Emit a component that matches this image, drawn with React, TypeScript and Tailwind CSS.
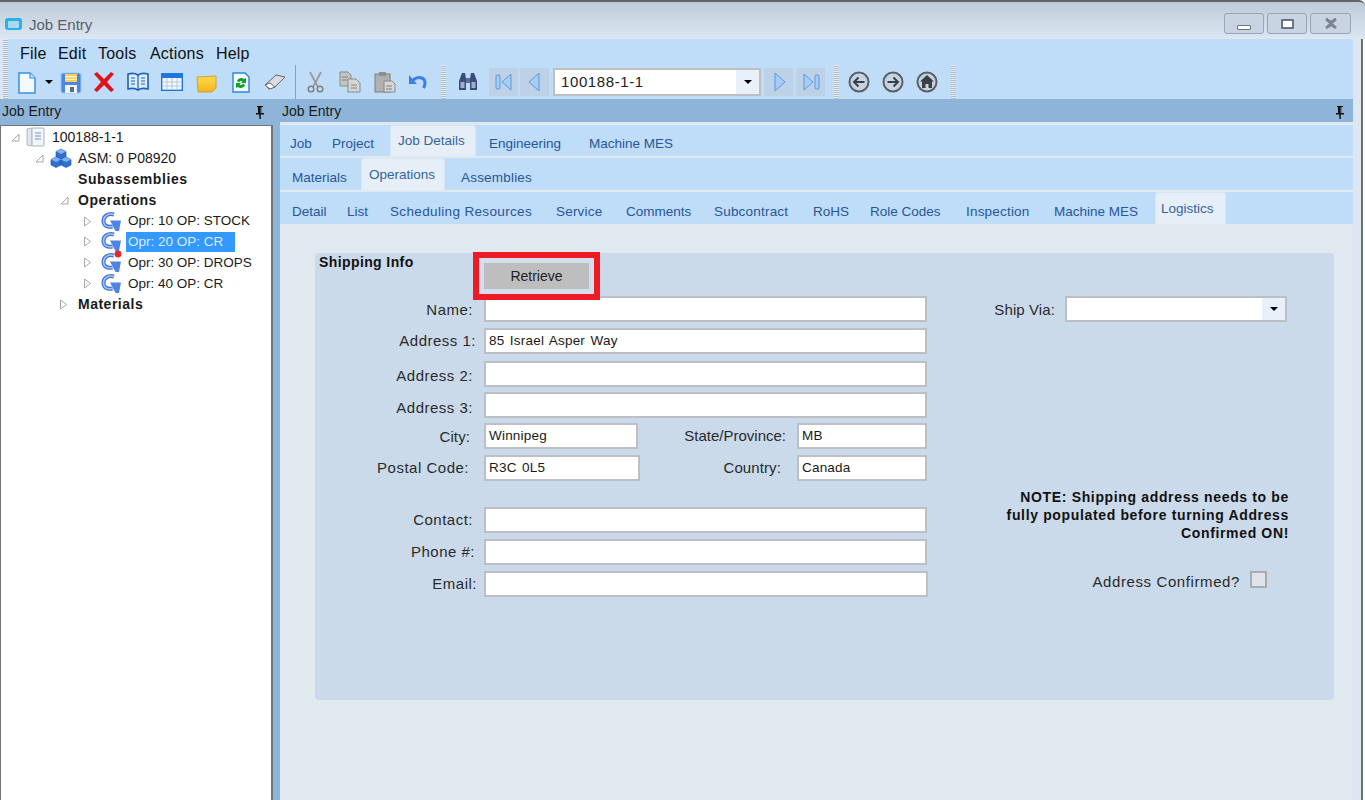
import type { ReactNode } from 'react';

const Grip = () => (
    <div className="w-[5px] h-full shrink-0 bg-[repeating-linear-gradient(to_bottom,#e4ebf2_0px,#e4ebf2_1px,#b4bcc4_1px,#b4bcc4_2px)]" />
);

const Slot = ({ children, className }: { children: ReactNode; className: string }) => (
    <div className={`flex items-center justify-center shrink-0 h-full ${className}`}>{children}</div>
);

const PinIcon = () => (
    <svg width="12" height="14" viewBox="0 0 12 14">
        <path d="M3 1h6v1H8v6h2v1.500H2V8h2V2H3z" fill="#111" />
        <rect x="5.300" y="9" width="1.500" height="5" fill="#111" />
        <rect x="6.500" y="2" width="1.500" height="6" fill="#777" />
    </svg>
);

const NewDoc = () => (
    <svg width="20" height="22" viewBox="0 0 20 22">
        <path d="M2 1h11l5 5v15H2z" fill="#f4f9ff" stroke="#3b8fe0" strokeWidth="1.500" />
        <path d="M13 1v5h5" fill="#cfe4fa" stroke="#3b8fe0" strokeWidth="1.200" />
    </svg>
);

const Save = () => (
    <svg width="22" height="22" viewBox="0 0 22 22">
        <rect x="1" y="1" width="20" height="20" rx="2" fill="#4a86e4" stroke="#9cc8f4" />
        <rect x="5" y="2" width="12" height="8" fill="#f7cf5e" />
        <rect x="5" y="4" width="12" height="1.500" fill="#fff1b8" />
        <rect x="5" y="7" width="12" height="1" fill="#fff1b8" />
        <rect x="5" y="13" width="12" height="8" fill="#eef2f8" />
        <rect x="10" y="15" width="4" height="5" fill="#5a6a86" />
    </svg>
);

const RedX = () => (
    <svg width="22" height="22" viewBox="0 0 22 22">
        <path d="M1 3l3-2 7 7 7-7 3 2-7 8 7 8-3 2-7-7-7 7-3-2 7-8z" fill="#e0121a" />
    </svg>
);

const Book = () => (
    <svg width="22" height="20" viewBox="0 0 22 20">
        <path d="M1 2c4-1 7-1 10 1 3-2 6-2 10-1v15c-4-1-7-1-10 1-3-2-6-2-10-1z" fill="#dcecfb" stroke="#1f62b8" strokeWidth="1.600" />
        <path d="M11 3v15M4 6h4M4 9h4M4 12h4M14 6h4M14 9h4M14 12h4" stroke="#1f62b8" strokeWidth="1.200" fill="none" />
    </svg>
);

const Calendar = () => (
    <svg width="22" height="18" viewBox="0 0 22 18">
        <rect x="0.700" y="0.700" width="20.600" height="16.600" fill="#f4f8fd" stroke="#1c78e0" strokeWidth="1.400" />
        <rect x="1" y="1" width="20" height="4" fill="#1c78e0" />
        <path d="M1 9h20M1 13h20M6 5v12M11 5v12M16 5v12" stroke="#b4c8e0" strokeWidth="1" />
    </svg>
);

const Note = () => (
    <svg width="21" height="18" viewBox="0 0 21 18">
        <defs>
            <linearGradient id="noteFill" x1="0" y1="0" x2="0" y2="1">
                <stop offset="0" stopColor="#fdd94e" />
                <stop offset="1" stopColor="#f3b61c" />
            </linearGradient>
        </defs>
        <path d="M1 2l19-1v12l-4 4-14 0z" fill="url(#noteFill)" stroke="#c8971c" strokeWidth="0.800" />
    </svg>
);

const Refresh = () => (
    <svg width="18" height="21" viewBox="0 0 18 21">
        <path d="M1 1h12l4 4v15H1z" fill="#f2f8fe" stroke="#2a86dc" strokeWidth="1.400" />
        <path d="M5 9c1-3 5-4 7-2l2-1v5h-5l1.500-1.500C9.500 8.500 7.500 9 7 10.500z" fill="#12a02c" />
        <path d="M13 13c-1 3-5 4-7 2l-2 1v-5h5l-1.500 1.500c1 1 3 .5 3.500-1z" fill="#12a02c" />
    </svg>
);

const Eraser = () => (
    <svg width="22" height="18" viewBox="0 0 22 18">
        <path d="M1 12L12 2l9 2-10 10-6 2z" fill="#d8dbe0" stroke="#666" strokeWidth="1" />
        <path d="M1 12l5 4 5-2-5-4z" fill="#fff" stroke="#666" strokeWidth="1" />
    </svg>
);

const Scissors = () => (
    <svg width="17" height="22" viewBox="0 0 17 22" fill="none">
        <path d="M3 1l8 15M14 1L6 16" stroke="#9a9a9a" strokeWidth="1.800" />
        <circle cx="4" cy="18" r="2.800" stroke="#808080" strokeWidth="1.500" />
        <circle cx="13" cy="18" r="2.800" stroke="#808080" strokeWidth="1.500" />
    </svg>
);

const CopyIcon = () => (
    <svg width="22" height="22" viewBox="0 0 22 22">
        <path d="M1 1h8l3 3v11H1z" fill="#c4c4c4" stroke="#8a8a8a" />
        <path d="M9 8h8l4 4v9H9z" fill="#d6d6d6" stroke="#8a8a8a" />
        <path d="M12 14h6M12 17h6M3 6h6M3 9h5" stroke="#808080" />
    </svg>
);

const Paste = () => (
    <svg width="22" height="22" viewBox="0 0 22 22">
        <rect x="1" y="3" width="15" height="18" fill="#b0b0b0" stroke="#808080" />
        <rect x="5" y="1" width="7" height="4" fill="#8f8f8f" />
        <path d="M10 10h8l3 3v8H10z" fill="#d6d6d6" stroke="#8a8a8a" />
        <path d="M12 15h6M12 18h6" stroke="#808080" />
    </svg>
);

const Undo = () => (
    <svg width="20" height="16" viewBox="0 0 20 16" fill="none">
        <path d="M5 6c5-4 12-3 12 3 0 2-.5 3-1.500 5" stroke="#3f7fe0" strokeWidth="3" />
        <path d="M1 1v9h8z" fill="#3f7fe0" />
    </svg>
);

const Binoculars = () => (
    <svg width="20" height="20" viewBox="0 0 20 20">
        <path d="M4 1h3l1 6v11H1V9z" fill="#3a4a7c" />
        <path d="M13 1h3l3 8v9h-7V7z" fill="#3a4a7c" />
        <rect x="8" y="6" width="4" height="5" fill="#5c6c9c" />
        <rect x="2.500" y="10" width="4" height="6" fill="#a0aed6" />
        <rect x="13.500" y="10" width="4" height="6" fill="#a0aed6" />
    </svg>
);

const NavButton = ({ dir, bar }: { dir: 'left' | 'right'; bar?: boolean }) => (
    <div className="w-[29px] h-[28px] shrink-0 flex items-center justify-center bg-[#bed2e7]">
        <svg width="18" height="18" viewBox="0 0 18 18">
            {dir === 'left' ? (
                <>
                    {bar && <rect x="1" y="2" width="4" height="14" rx="1" fill="#a7cdf5" stroke="#5d97dc" />}
                    <path d={bar ? 'M16 1v16L7 9z' : 'M13 0v18L3 9z'} fill="#a7cdf5" stroke="#5d97dc" />
                </>
            ) : (
                <>
                    <path d={bar ? 'M2 1v16l9-8z' : 'M5 0v18L15 9z'} fill="#a7cdf5" stroke="#5d97dc" />
                    {bar && <rect x="13" y="2" width="4" height="14" rx="1" fill="#a7cdf5" stroke="#5d97dc" />}
                </>
            )}
        </svg>
    </div>
);

const CircleIcon = ({ children }: { children: ReactNode }) => (
    <svg width="22" height="22" viewBox="0 0 22 22">
        <circle cx="11" cy="11" r="9.500" fill="#c6d3e0" stroke="#5a5f66" strokeWidth="2" />
        {children}
    </svg>
);

const ComboArrow = () => (
    <div className="w-[23px] h-full shrink-0 flex items-center justify-center bg-[#e8f1fa]">
        <div className="w-0 h-0 border-x-[4px] border-x-transparent border-t-[4px] border-t-black" />
    </div>
);

const Expander = ({ open }: { open?: boolean }) => (
    <svg width="9" height="11" viewBox="0 0 9 11" fill="none">
        {open ? <path d="M1 9h7V2z" stroke="#a8a8a8" /> : <path d="M1.500 1l6 4.500-6 4.500z" stroke="#a8a8a8" />}
    </svg>
);

const JobFile = () => (
    <svg width="20" height="20" viewBox="0 0 20 20">
        <path d="M1 2l5-1v18l-5-1z" fill="#dfe6ee" stroke="#b0bac6" />
        <rect x="6" y="1" width="12" height="18" rx="1" fill="#f2f5f9" stroke="#a8b2be" />
        <path d="M9 6h6M9 9h6M9 12h6" stroke="#6f93c4" />
    </svg>
);

const Cubes = () => (
    <svg width="22" height="21" viewBox="0 0 22 21">
        <path d="M11 1l5 2.500V9l-5 2.500L6 9V3.500z" fill="#2f6fd0" stroke="#1c4fa8" strokeWidth="0.600" />
        <path d="M11 1l5 2.500-5 2.500-5-2.500z" fill="#7fb2f0" />
        <path d="M6 9l5 2.500V17l-5 2.500L1 17v-5.500z" fill="#2f6fd0" stroke="#1c4fa8" strokeWidth="0.600" />
        <path d="M6 9l5 2.500-5 2.500-5-2.500z" fill="#7fb2f0" />
        <path d="M16 9l5 2.500V17l-5 2.500-5-2.500v-5.500z" fill="#2f6fd0" stroke="#1c4fa8" strokeWidth="0.600" />
        <path d="M16 9l5 2.500-5 2.500-5-2.500z" fill="#7fb2f0" />
    </svg>
);

const OpIcon = ({ flag }: { flag?: boolean }) => (
    <svg width="21" height="21" viewBox="0 0 21 21" fill="none" className="overflow-visible">
        <path d="M13 3.500C7 2 2.500 5 2.500 10c0 4.500 3.500 6.500 9 5.500" stroke="#3f74dc" strokeWidth="4" />
        <path d="M13 3.500C7 2 2.500 5 2.500 10c0 4.500 3.500 6.500 9 5.500" stroke="#a9c6f6" strokeWidth="1.500" />
        <path d="M9 9.500h11L18 20h-3.500z" fill="#4f84e4" />
        {flag && <circle cx="17" cy="2" r="3.400" fill="#e02b2b" />}
    </svg>
);

const TreeRow = ({ pad, children }: { pad: string; children: ReactNode }) => (
    <div className={`flex items-center h-[20.900px] text-[14px] text-[#1a1a1a] whitespace-nowrap ${pad}`}>{children}</div>
);

const TreeOpr = ({ label, selected, flag }: { label: string; selected?: boolean; flag?: boolean }) => (
    <TreeRow pad="pl-[82px]">
        <Slot className="w-[18px] justify-start"><Expander /></Slot>
        <Slot className="w-[25px] justify-start"><OpIcon flag={flag} /></Slot>
        <span className={selected ? 'w-[109px] pl-[2px] leading-[20px] text-[13.500px] bg-[#3399ff] text-[#dcecff]' : 'pl-[2px] text-[13.500px]'}>{label}</span>
    </TreeRow>
);

const Tab = ({ label, width, active, lead }: { label: string; width: string; active?: boolean; lead: string }) => (
    <div className={`flex items-center shrink-0 h-full whitespace-nowrap text-[13.500px] ${width}`}>
        {active ? (
            <div className={`h-full w-full rounded-t-[3px] bg-[#e6eff7] border-x border-t border-[#d6e6f6] text-[#34649f] pt-[1px] flex items-center ${lead}`}>{label}</div>
        ) : (
            <div className={`pt-[8px] text-[#26579a] ${lead}`}>{label}</div>
        )}
    </div>
);

const Box = ({ width, value }: { width: string; value?: string }) => (
    <div className={`h-[26px] shrink-0 bg-white border-2 border-[#bcc0c4] pl-[3px] flex items-center text-[13.500px] tracking-[0.2px] [word-spacing:1.500px] text-[#1a1a1a] ${width}`}>{value}</div>
);

const Label = ({ text, className }: { text: string; className: string }) => (
    <div className={`shrink-0 text-right text-[15px] leading-[18px] text-[#2a2a2a] ${className}`}>{text}</div>
);

const TextRow = ({ label, pr, mt, width = 'w-[443px]', value }: { label: string; pr: string; mt: string; width?: string; value?: string }) => (
    <div className={`flex items-center h-[26px] ${mt}`}>
        <Label text={label} className={`w-[169px] tracking-[0.5px] ${pr}`} />
        <Box width={width} value={value} />
    </div>
);

const App = () => {
    return (
        <div className="relative w-[1365px] h-[800px] overflow-hidden flex flex-col bg-white font-['Liberation_Sans',sans-serif]">
            {/* window frame */}
            <div className="h-[39px] shrink-0 flex items-center pl-[5px] pr-[14px] border-t-2 border-[#606468] bg-[linear-gradient(to_bottom,#bfcad8,#dce7f3)] rounded-tr-[6px]">
                <div className="w-[17px] h-[12px] rounded-[3px] bg-[#28b0ea] flex items-center justify-center mt-[7px]">
                    <div className="w-[11px] h-[7px] rounded-[1px] bg-[#a9d9ef]" />
                </div>
                <div className="ml-[7px] mt-[10px] text-[15px] text-[#5a6068]">Job Entry</div>
                <div className="ml-auto flex gap-[3px] mt-[6px]">
                    <div className="w-[40px] h-[21px] rounded-[3px] border border-[#98a4b2] bg-[#c8d4e2] flex items-end justify-center pb-[3px]">
                        <div className="w-[14px] h-[5px] rounded-[1px] bg-white border border-[#6a7380]" />
                    </div>
                    <div className="w-[40px] h-[21px] rounded-[3px] border border-[#98a4b2] bg-[#c8d4e2] flex items-center justify-center">
                        <div className="w-[13px] h-[10px] rounded-[1px] bg-white border-2 border-[#6a7380]" />
                    </div>
                    <div className="w-[41px] h-[21px] rounded-[3px] border border-[#98a4b2] bg-[#c8d4e2] flex items-center justify-center">
                        <svg width="14" height="11" viewBox="0 0 14 11">
                            <path d="M2 1l5 3 5-3M2 10l5-3 5 3M2 1l10 9M12 1L2 10" stroke="#7a8390" strokeWidth="2.500" fill="none" />
                        </svg>
                    </div>
                </div>
            </div>

            <div className="flex-1 min-h-0 flex flex-col pr-[8px] mr-[2px] bg-[#dce7f3] border-r-2 border-[#6c7074]">
                {/* menu and toolbar */}
                <div className="h-[26px] shrink-0 ml-[3px] flex items-center bg-[#bfdcf8]">
                    <div className="w-[5px] h-full"><Grip /></div>
                    <div className="flex items-center pl-[12px] pt-[3px] text-[16px] tracking-[0.2px] text-[#111]">
                        <div className="w-[38px]">File</div>
                        <div className="w-[40px]">Edit</div>
                        <div className="w-[52px]">Tools</div>
                        <div className="w-[66px]">Actions</div>
                        <div>Help</div>
                    </div>
                </div>
                <div className="h-[34px] shrink-0 ml-[3px] flex items-center bg-[#bfdcf8]">
                    <Grip />
                    <Slot className="w-[35px] pl-[2px] pt-[1px]"><NewDoc /></Slot>
                    <Slot className="w-[11px]">
                        <div className="w-0 h-0 border-x-[4px] border-x-transparent border-t-[4px] border-t-black" />
                    </Slot>
                    <Slot className="w-[33px] pt-[1px]"><Save /></Slot>
                    <Slot className="w-[34px]"><RedX /></Slot>
                    <Slot className="w-[34px]"><Book /></Slot>
                    <Slot className="w-[34px]"><Calendar /></Slot>
                    <Slot className="w-[34px] pt-[3px]"><Note /></Slot>
                    <Slot className="w-[35px]"><Refresh /></Slot>
                    <Slot className="w-[34px]"><Eraser /></Slot>
                    <div className="w-[6px] h-full flex justify-center shrink-0">
                        <div className="w-[1px] h-full bg-[#929ea8]" />
                    </div>
                    <Slot className="w-[34px]"><Scissors /></Slot>
                    <Slot className="w-[36px]"><CopyIcon /></Slot>
                    <Slot className="w-[33px]"><Paste /></Slot>
                    <Slot className="w-[34px]"><Undo /></Slot>
                    <div className="w-[6px] shrink-0" />
                    <Grip />
                    <Slot className="w-[43px]"><Binoculars /></Slot>
                    <NavButton dir="left" bar />
                    <div className="w-[2px] shrink-0" />
                    <NavButton dir="left" />
                    <div className="w-[4px] shrink-0" />
                    <div className="w-[208px] h-[28px] shrink-0 flex items-center bg-white border-2 border-[#bcc0c4]">
                        <div className="flex-1 pl-[6px] text-[15px] tracking-[0.6px] text-[#222]">100188-1-1</div>
                        <ComboArrow />
                    </div>
                    <div className="w-[3px] shrink-0" />
                    <NavButton dir="right" />
                    <div className="w-[3px] shrink-0" />
                    <NavButton dir="right" bar />
                    <div className="w-[9px] shrink-0" />
                    <Grip />
                    <Slot className="w-[36px] pl-[3px]">
                        <CircleIcon><path d="M16.500 11H6.500M10.500 6.500L6 11l4.500 4.500" stroke="#3a3f46" strokeWidth="2" fill="none" /></CircleIcon>
                    </Slot>
                    <Slot className="w-[34px] pl-[2px]">
                        <CircleIcon><path d="M5.500 11h10M11.500 6.500L16 11l-4.500 4.500" stroke="#3a3f46" strokeWidth="2" fill="none" /></CircleIcon>
                    </Slot>
                    <Slot className="w-[34px] pl-[2px]">
                        <CircleIcon><path d="M11 4l7 6.500h-2V17h-3.500v-4h-3v4H6v-6.500H4z" fill="#3a3f46" /></CircleIcon>
                    </Slot>
                    <div className="w-[8px] shrink-0" />
                    <Grip />
                </div>

                {/* dock headers */}
                <div className="h-[23px] shrink-0 flex items-center pt-[2px] bg-[#8fb4d9] text-[14px] text-[#1a1a1a]">
                    <div className="w-[273px] shrink-0 pl-[2px] flex items-center justify-between pr-[7px]">
                        <span>Job Entry</span>
                        <PinIcon />
                    </div>
                    <div className="flex-1 pl-[9px] flex items-center justify-between pr-[7px]">
                        <span>Job Entry</span>
                        <PinIcon />
                    </div>
                </div>
                <div className="h-[3px] shrink-0 flex">
                    <div className="w-[280px] shrink-0 bg-[#8fb4d9]" />
                    <div className="flex-1 bg-[#dfe8f1]" />
                </div>

                <div className="flex-1 min-h-0 flex">
                    {/* job tree */}
                    <div className="w-[273px] shrink-0 pt-px bg-white border-l border-t border-r-2 border-[#6f7479]">
                        <TreeRow pad="pl-[10px]">
                            <Slot className="w-[15px] justify-start"><Expander open /></Slot>
                            <Slot className="w-[26px] justify-start"><JobFile /></Slot>
                            <span>100188-1-1</span>
                        </TreeRow>
                        <TreeRow pad="pl-[34px]">
                            <Slot className="w-[15px] justify-start"><Expander open /></Slot>
                            <Slot className="w-[28px] justify-start"><Cubes /></Slot>
                            <span>ASM: 0 P08920</span>
                        </TreeRow>
                        <TreeRow pad="pl-[77px]"><span className="font-bold tracking-[0.6px]">Subassemblies</span></TreeRow>
                        <TreeRow pad="pl-[59px]">
                            <Slot className="w-[18px] justify-start"><Expander open /></Slot>
                            <span className="font-bold tracking-[0.5px]">Operations</span>
                        </TreeRow>
                        <TreeOpr label="Opr: 10 OP: STOCK" />
                        <TreeOpr label="Opr: 20 OP: CR" selected />
                        <TreeOpr label="Opr: 30 OP: DROPS" flag />
                        <TreeOpr label="Opr: 40 OP: CR" />
                        <TreeRow pad="pl-[58px]">
                            <Slot className="w-[19px] justify-start"><Expander /></Slot>
                            <span className="font-bold tracking-[0.5px]">Materials</span>
                        </TreeRow>
                    </div>
                    <div className="w-[7px] shrink-0 bg-[#8fb4d9]" />

                    {/* job details */}
                    <div className="flex-1 min-w-0 flex flex-col bg-[#e0e8f0]">
                        <div className="h-[31px] shrink-0 flex pl-[10px] bg-[#bfdcf8]">
                            <Tab label="Job" width="w-[42px]" lead="" />
                            <Tab label="Project" width="w-[58px]" lead="" />
                            <Tab label="Job Details" width="w-[86px]" lead="pl-[7px]" active />
                            <Tab label="Engineering" width="w-[113px]" lead="pl-[13px]" />
                            <Tab label="Machine MES" width="w-[100px]" lead="" />
                        </div>
                        <div className="h-[32px] shrink-0 mt-[2px] flex pl-[12px] bg-[#bfdcf8]">
                            <Tab label="Materials" width="w-[69px]" lead="" />
                            <Tab label="Operations" width="w-[84px]" lead="pl-[7px]" active />
                            <Tab label="Assemblies" width="w-[90px]" lead="pl-[16px] tracking-[0.2px]" />
                        </div>
                        <div className="h-[32px] shrink-0 mt-[2px] flex pl-[12px] bg-[#bfdcf8]">
                            <Tab label="Detail" width="w-[55px]" lead="" />
                            <Tab label="List" width="w-[43px]" lead="" />
                            <Tab label="Scheduling Resources" width="w-[166px]" lead="tracking-[0.35px]" />
                            <Tab label="Service" width="w-[70px]" lead="tracking-[0.2px]" />
                            <Tab label="Comments" width="w-[88px]" lead="" />
                            <Tab label="Subcontract" width="w-[99px]" lead="tracking-[0.2px]" />
                            <Tab label="RoHS" width="w-[57px]" lead="" />
                            <Tab label="Role Codes" width="w-[96px]" lead="" />
                            <Tab label="Inspection" width="w-[88px]" lead="tracking-[0.2px]" />
                            <Tab label="Machine MES" width="w-[101px]" lead="" />
                            <Tab label="Logistics" width="w-[71px]" lead="pl-[5px]" active />
                        </div>

                        <div className="flex-1 pt-[29px] pl-[35px] pr-[19px]">
                            {/* shipping info panel */}
                            <div className="h-[447px] flex rounded-[4px] bg-[#cadaea]">
                                <div className="w-[640px] shrink-0">
                                    <div className="h-[43px] flex items-start">
                                        <div className="w-[158px] pl-[4px] -mt-[1px] text-[14px] tracking-[0.4px] font-bold text-[#111]">Shipping Info</div>
                                        <div className="relative z-10 w-[127px] h-[48px] -mt-px shrink-0 border-[6px] border-[#ed1c24] bg-[#d3dfec] flex items-center justify-center">
                                            <div className="w-[105px] h-[26px] bg-[#bebebe] flex items-center justify-center text-[14px] text-[#222]">Retrieve</div>
                                        </div>
                                    </div>
                                    <TextRow label="Name:" pr="pr-[11px] pt-[2px]" mt="mt-0" />
                                    <TextRow label="Address 1:" pr="pr-[8px]" mt="mt-[6px]" value="85 Israel Asper Way" />
                                    <TextRow label="Address 2:" pr="pr-[11px] pt-[4px]" mt="mt-[7px]" />
                                    <TextRow label="Address 3:" pr="pr-[11px] pt-[6px]" mt="mt-[5px]" />
                                    <div className="flex items-center h-[26px] mt-[5px]">
                                        <Label text="City:" className="w-[169px] pr-[14px] tracking-[0.1px] pt-[2px]" />
                                        <Box width="w-[154px]" value="Winnipeg" />
                                        <Label text="State/Province:" className="w-[148px]" />
                                        <Box width="w-[130px] ml-[11px]" value="MB" />
                                    </div>
                                    <div className="flex items-center h-[26px] mt-[6px]">
                                        <Label text="Postal Code:" className="w-[169px] pr-[15px] tracking-[0.5px]" />
                                        <Box width="w-[156px]" value="R3C 0L5" />
                                        <Label text="Country:" className="w-[141px] tracking-[0.1px]" />
                                        <Box width="w-[130px] ml-[16px]" value="Canada" />
                                    </div>
                                    <TextRow label="Contact:" pr="pr-[11px]" mt="mt-[26px]" />
                                    <TextRow label="Phone #:" pr="pr-[9px]" mt="mt-[6px]" />
                                    <TextRow label="Email:" pr="pr-[7px]" mt="mt-[6px]" width="w-[444px]" />
                                </div>
                                <div className="w-[334px] shrink-0 pt-[43px]">
                                    <div className="flex items-center h-[26px]">
                                        <Label text="Ship Via:" className="w-[100px] pt-[2px] tracking-[0.1px]" />
                                        <div className="w-[222px] h-[26px] ml-[10px] shrink-0 flex items-center bg-white border-2 border-[#bcc0c4]">
                                            <div className="flex-1" />
                                            <ComboArrow />
                                        </div>
                                    </div>
                                    <div className="mt-[166px] text-right text-[14px] tracking-[0.65px] leading-[18px] font-bold text-[#111]">
                                        <div>NOTE: Shipping address needs to be</div>
                                        <div>fully populated before turning Address</div>
                                        <div>Confirmed ON!</div>
                                    </div>
                                    <div className="mt-[27px] flex items-center justify-end pr-[22px]">
                                        <div className="pt-[2px] text-[15px] tracking-[0.6px] text-[#2a2a2a]">Address Confirmed?</div>
                                        <div className="w-[17px] h-[17px] ml-[10px] -mt-[3px] bg-[#dfe4ea] border-2 border-[#a8acb0]" />
                                    </div>
                                </div>
                            </div>
                        </div>
                    </div>
                </div>
            </div>
        </div>
    );
};

export default App;
